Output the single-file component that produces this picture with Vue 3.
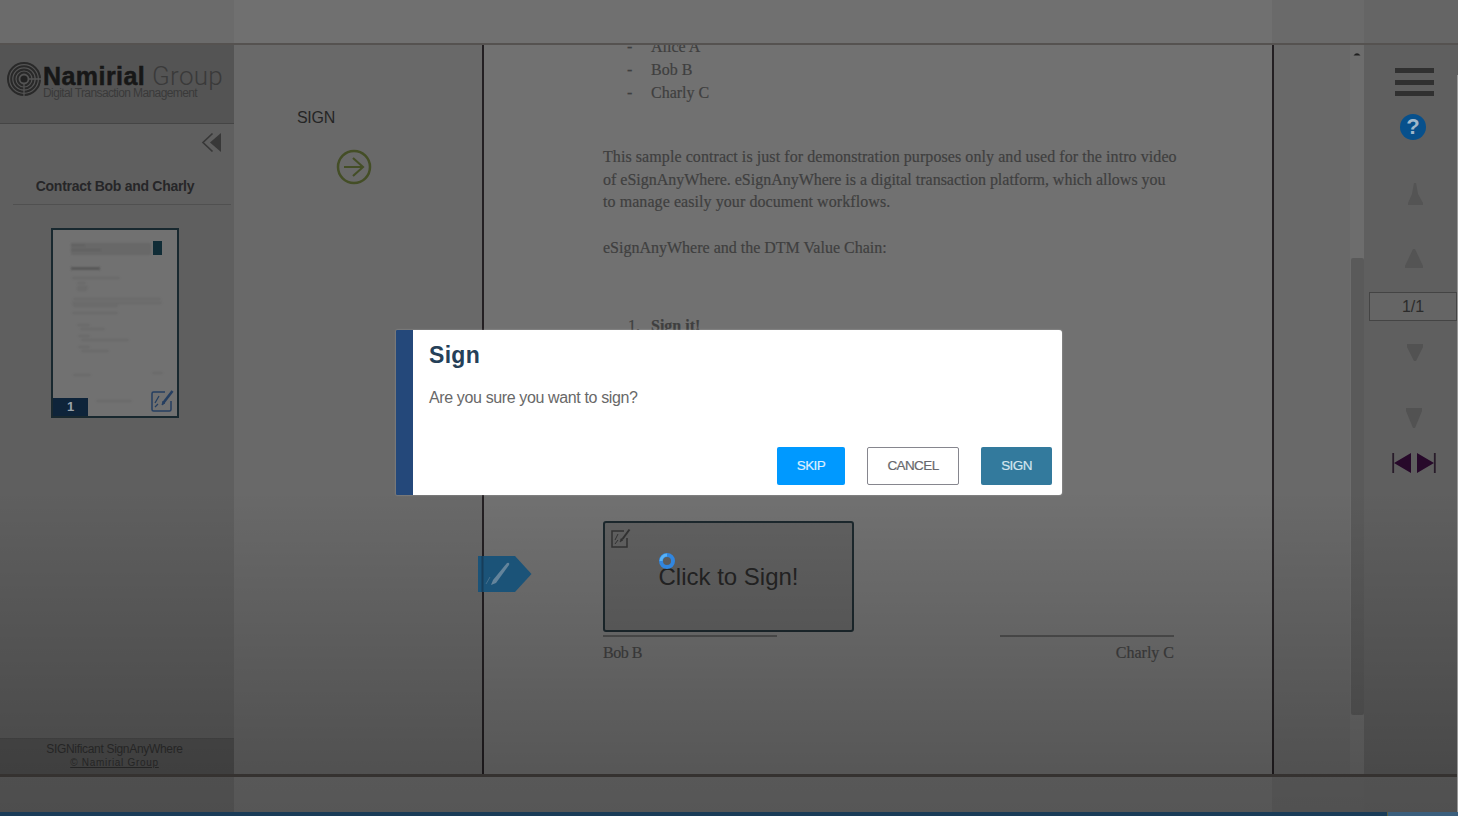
<script setup>
const participants = ['Alice A', 'Bob B', 'Charly C']
const paragraph = [
  { text: 'This sample contract is just for demonstration purposes only and used for the intro video', cls: 'l1' },
  { text: 'of eSignAnyWhere. eSignAnyWhere is a digital transaction platform, which allows you', cls: 'l2' },
  { text: 'to manage easily your document workflows.', cls: 'l3' },
]
const rings = [6.4, 9.6, 12.8, 16]
</script>

<template>
  <div class="screen">
    <div class="strip top"><i class="a"></i><i class="b"></i><i class="c"></i><i class="d"></i></div>
    <div class="rule"></div>
    <main class="work">
      <aside class="side">
        <header class="brand">
          <svg class="logo" width="36" height="38" viewBox="-18 -19 36 38">
            <circle r="3.6" fill="#222" />
            <circle v-for="r in rings" :key="r" :r="r" fill="none" stroke="#292929" stroke-width="2" />
            <path d="M0 5V19M5 0H18" stroke="#545454" stroke-width="1.3" />
          </svg>
          <div class="names">
            <div class="name"><b>Namirial</b><span>Group</span></div>
            <div class="tag">Digital Transaction Management</div>
          </div>
        </header>
        <div class="collapse">
          <svg width="22" height="22" viewBox="0 0 22 22">
            <path d="M20 1V20L9 10.500Z" fill="#383838" />
            <path d="M11.500 1.500L2 10.500L11.500 19.500" fill="none" stroke="#383838" stroke-width="1.7" />
          </svg>
        </div>
        <h3 class="doc-title"><span>Contract Bob and Charly</span></h3>
        <div class="thumb">
          <svg width="124" height="186" viewBox="0 0 124 186">
            <defs><filter id="soft"><feGaussianBlur stdDeviation="0.8" /></filter></defs>
            <g filter="url(#soft)">
              <rect x="18" y="13" width="80" height="12" fill="#676767" />
              <path d="M18 15h14M18 20h30" stroke="#606060" stroke-width="2" />
              <path d="M18 38.500h29" stroke="#4c4c4c" stroke-width="2" />
              <path d="M19 48h48M24 53h9M24 57h11M24 60h10M20 69h88M19 73h90M20 76h45M19 83h46M24 95h13M27 99h25M25 106h12M28 110h48M25 117h12M28 121h28M20 145h18M99 143h11M43 171h36" stroke="#656565" stroke-width="1.400" />
            </g>
            <rect x="100" y="11" width="9" height="14" fill="#102c36" />
          </svg>
          <span class="num">1</span>
          <svg class="edit" width="24" height="24" viewBox="0 0 24 24" fill="none" stroke="#253e60">
            <path d="M15 3H3.500Q2 3 2 4.500V20.500Q2 22 3.500 22H19.500Q21 22 21 20.500V12" stroke-width="1.500" />
            <path d="M22.500 2L14 13" stroke-width="2.600" /><path d="M12 16L13 12L15 14Z" fill="#253e60" stroke-width="1" />
            <path d="M5 14L9 7M5 18L8 15" stroke-width="1.300" />
          </svg>
        </div>
        <footer class="foot"><span class="f1">SIGNificant SignAnyWhere</span><span class="f2">© Namirial Group</span></footer>
      </aside>

      <section class="steps">
        <div class="step-label">SIGN</div>
        <svg class="go" width="36" height="36" viewBox="0 0 36 36" fill="none" stroke="#444e26" stroke-width="2.500">
          <circle cx="18" cy="18" r="16" /><path d="M8 18H27M17 9L27 18L17 27" stroke-width="2.100" />
        </svg>
      </section>

      <article class="page">
        <ul class="people"><li v-for="p in participants" :key="p"><i>-</i><span>{{ p }}</span></li></ul>
        <div class="para"><p v-for="l in paragraph" :key="l.cls"><span :class="l.cls">{{ l.text }}</span></p></div>
        <p class="chain"><span>eSignAnyWhere and the DTM Value Chain:</span></p>
        <div class="item"><i>1.</i><b>Sign it!</b></div>
        <div class="sign-box">
          <svg width="21" height="21" viewBox="0 0 21 21" fill="none" stroke="#333">
            <path d="M14 3H2V19H17V10" stroke-width="1.500" /><path d="M19.500 1.500L12.500 11" stroke-width="2" /><path d="M10 14L11 10.500L13 12Z" fill="#333" stroke-width=".6" />
            <path d="M5 12L8 6M5 16L8 12" stroke-width="1" />
          </svg>
          <span>Click to Sign!</span>
        </div>
        <div class="signers"><div><span class="bob">Bob B</span></div><div class="right"><span class="charly">Charly C</span></div></div>
      </article>

      <div class="gutter">
        <svg width="14" height="30" viewBox="0 0 14 30"><path d="M3.500 10.500Q7 6 10.500 10.500Z" fill="#202020" /></svg>
        <i class="bar"></i>
      </div>

      <nav class="tools">
        <div class="menu"><i></i><i></i><i></i></div>
        <div class="help">?</div>
        <svg class="t1" width="20" height="24" viewBox="0 0 20 24"><path d="M9 1H11L13 12L18 21V23H3V21L7 12Z" fill="#545454" /></svg>
        <svg class="t2" width="20" height="24" viewBox="0 0 20 24"><path d="M9 2H11L19 19V21H1V19Z" fill="#545454" /></svg>
        <div class="count">1/1</div>
        <svg class="t3" width="20" height="24" viewBox="0 0 20 24"><path d="M2 3H18V6L11 20H9L2 6Z" fill="#525252" /></svg>
        <svg class="t4" width="20" height="24" viewBox="0 0 20 24"><path d="M2 2H18V5L11 22H9L2 5Z" fill="#525252" /></svg>
        <svg class="ends" width="44" height="20" viewBox="0 0 44 20">
          <path d="M19 0V20L2 10ZM25 0V20L42 10Z" fill="#27092a" /><path d="M1.200 0V20M42.800 0V20" stroke="#281c2a" stroke-width="1.800" />
        </svg>
      </nav>
    </main>
    <div class="rule low"></div>
    <div class="strip bottom"><i class="a"></i><i class="b"></i><i class="c"></i><i class="d"></i></div>
    <div class="taskbar"><i></i></div>
    <div class="shade"></div>
    <div class="edge"></div>
    <svg class="flag" width="54" height="36" viewBox="0 0 54 36">
      <path d="M0 0H37L53.500 18L37 36H0Z" fill="#1b5378" /><path d="M4.500 0V36" stroke="#173d59" stroke-width="2" />
      <path d="M29 7Q32 6 31 9L18 27L13 29L15 24Z" fill="#64849b" /><path d="M8 28L12 21" stroke="#456f8c" fill="none" />
    </svg>
    <svg class="spinner" width="18" height="18" viewBox="0 0 18 18"><circle cx="9" cy="9" r="6" fill="none" stroke="#3186df" stroke-width="4" /><path d="M3 9A6 6 0 0 1 9 3" fill="none" stroke="#57b1f4" stroke-width="3" /></svg>
    <div class="dialog" role="dialog">
      <h2><span>Sign</span></h2>
      <p><span>Are you sure you want to sign?</span></p>
      <div class="actions"><button class="skip">SKIP</button><button class="cancel">CANCEL</button><button class="sign">SIGN</button></div>
    </div>
  </div>
</template>

<style>
body { margin: 0; overflow: hidden; }
</style>
<style scoped>
* { box-sizing: border-box; }
.screen { position: relative; width: 1458px; height: 816px; display: flex; flex-direction: column; overflow: hidden; background: #696969; font-family: "Liberation Sans", Arial, sans-serif; }
.screen span { white-space: nowrap; }
i { font-style: normal; }
h2, h3, p, ul { margin: 0; padding: 0; }
.strip { display: grid; grid-template-columns: 234px 1038px 92px 1fr; flex: none; }
.top { height: 43px; }
.bottom { height: 35px; }
.a { background: #6b6b6b; } .b { background: #707070; } .c { background: #6a6a6a; } .d { background: #656565; }
.bottom .a { background: #676767; } .bottom .b { background: #737373; } .bottom .c { background: #6c6c6c; }  .bottom .d { background: #6b6b6b; }
.rule { height: 2px; background: #555250; flex: none; }
.low { height: 3px; background: #45413f; }
.work { height: 729px; flex: none; display: grid; grid-template-columns: 234px 248px 792px 90px 1fr; }
.side { background: #5f5f5f; display: flex; flex-direction: column; }
.brand { height: 79px; background: #545454; border-bottom: 1px solid #454545; display: flex; padding: 15px 0 0 6px; }
.logo { flex: none; }
.names { padding-left: 1px; }
.name { display: flex; height: 28px; line-height: 32px; color: #171717; }
.name b { font-size: 25px; letter-spacing: .45px; width: 109px; -webkit-text-stroke: .5px #171717; }
.name span { font-family: Roboto, sans-serif; font-weight: 300; font-size: 26px; letter-spacing: .3px; color: #3a3a3a; }
.tag { font-size: 12px; line-height: 12px; margin-top: -1px; letter-spacing: -.6px; color: #3a3a3a; white-space: nowrap; }
.collapse { height: 40px; padding: 8px 11px 0 0; display: flex; justify-content: flex-end; }
.doc-title { height: 41px; margin: 0 3px 0 13px; border-bottom: 1px solid #505050; text-align: center; line-height: 44px; font-size: 14px; color: #262628; padding-right: 14px; }
.doc-title span { letter-spacing: -.28px; }
.thumb { position: relative; width: 128px; height: 190px; margin: 23px 0 0 51px; border: 2px solid #18282f; background: #717171; }
.thumb svg { display: block; }
.num { position: absolute; left: 0; bottom: 0; width: 35px; height: 18px; background: #0e243a; color: #99a3aa; font: bold 13px/18px "Liberation Sans", sans-serif; text-align: center; }
.thumb .edit { position: absolute; right: 3px; bottom: 3px; }
.foot { margin-top: auto; height: 36px; background: #525252; border-top: 1px solid #4d4d4d; display: flex; flex-direction: column; align-items: center; color: #2f2f2f; padding: 3px 5px 0 0; }
.f1 { font-size: 12px; line-height: 14px; letter-spacing: -.32px; }
.f2 { font-size: 10px; line-height: 13px; text-decoration: underline; letter-spacing: .7px; }
.steps { padding-top: 64px; background: #696969; }
.step-label { margin-left: 63px; font-size: 16px; line-height: 18px; letter-spacing: -.3px; color: #252525; }
.go { display: block; margin: 22px 0 0 102px; }
.page { background: #717171; border-left: 2px solid #231f22; border-right: 2px solid #231f22; padding-left: 119px; font-family: "Liberation Serif", serif; font-size: 16px; color: #3f3f3f; overflow: hidden; -webkit-text-stroke: .2px #3f3f3f; }
.people { list-style: none; margin-top: -9px; height: 101px; }
.people li { display: flex; height: 22.900px; line-height: 22.900px; padding-left: 24px; }
.people i { width: 24px; }
.para p { height: 22.700px; line-height: 22.700px; }
.para { height: 91px; padding-top: 9px; }
.l1 { letter-spacing: .075px; } .l2 { letter-spacing: -.01px; } .l3 { letter-spacing: .07px; }
.chain { height: 23px; line-height: 23px; margin-top: 8px; }
.item { margin-top: 55px; height: 24px; line-height: 24px; display: flex; padding-left: 25px; }
.item i { width: 23px; }
.sign-box { position: relative; margin-top: 183px; width: 251px; height: 111px; border: 2px solid #1c282d; border-radius: 3px; background: #616161; display: flex; align-items: center; justify-content: center; font: 24px "Liberation Sans", sans-serif; color: #242424; -webkit-text-stroke: 0; }
.sign-box svg { position: absolute; left: 5px; top: 5px; }
.signers { width: 571px; margin-top: 3px; display: flex; justify-content: space-between; }
.signers div { width: 174px; border-top: 2px solid #4f4f4f; height: 34px; line-height: 32px; }
.bob { letter-spacing: -.5px; }
.right { text-align: right; }
.gutter { display: flex; flex-direction: column; align-items: flex-end; background: linear-gradient(90deg, #696969 76px, #6d6d6d 76px); }
.bar { margin-top: 183px; width: 13px; height: 457px; background: #5a5a5a; border-radius: 2px; }
.tools { background: #5f5f5f; display: flex; flex-direction: column; align-items: flex-start; }
.menu { margin: 23px 0 0 31px; width: 39px; height: 28px; display: flex; flex-direction: column; justify-content: space-between; }
.menu i { height: 5px; background: #303030; }
.help { margin: 18px 0 0 36px; width: 26px; height: 26px; border-radius: 50%; background: #07508c; color: #a0b7ca; font-weight: bold; font-size: 22px; line-height: 26px; text-align: center; }
.t1 { margin: 42px 0 0 41px; } .t2 { margin: 41px 0 0 40px; }
.count { margin: 21px 0 0 5px; width: 88px; height: 29px; border: 1px solid #444; background: #656565; font-size: 16px; line-height: 27px; color: #2b2b2b; text-align: center; }
.t3 { margin: 20px 0 0 41px; } .t4 { margin: 41px 0 0 40px; } .ends { margin: 23px 0 0 28px; }
.taskbar { height: 4px; background: #1a3c58; display: flex; justify-content: flex-end; z-index: 2; }
.taskbar i { width: 71px; background: #3b5f7d; border-left: 1px solid #555d42; }
.shade { position: absolute; left: 0; right: 0; top: 490px; height: 322px; background: linear-gradient(rgba(0,0,0,0), rgba(0,0,0,.24) 90%, rgba(0,0,0,.25)); }
.edge { position: absolute; right: 0; top: 75px; width: 1px; height: 737px; background: #989898; }
.flag { position: absolute; left: 478px; top: 556px; }
.spinner { position: absolute; left: 658px; top: 552px; }
.dialog { position: absolute; left: 396px; top: 330px; width: 666px; height: 165px; background: #fff; border-left: 17px solid #24487a; border-radius: 1px 3px 3px 1px; box-shadow: 0 0 2px rgba(255,255,255,.4); padding: 11px 10px 10px 16px; display: flex; flex-direction: column; }
.dialog h2 { font-size: 23px; line-height: 28px; color: #254058; letter-spacing: .3px; }
.dialog p { margin-top: 19px; font-size: 16px; line-height: 20px; letter-spacing: -.37px; color: #686868; }
.actions { margin-top: auto; display: flex; justify-content: flex-end; gap: 22px; }
button { height: 38px; padding: 0 0 2px; border-radius: 2px; font: 13.500px "Liberation Sans", sans-serif; letter-spacing: -.6px; border: 1px solid transparent; -webkit-text-stroke: .2px; }
.skip { width: 68px; background: #0099ff; color: #dcefff; }
.cancel { width: 92px; background: #fff; border-color: #86868e; color: #68686c; }
.sign { width: 71px; background: #337a9d; color: #d4e5ef; }
</style>
